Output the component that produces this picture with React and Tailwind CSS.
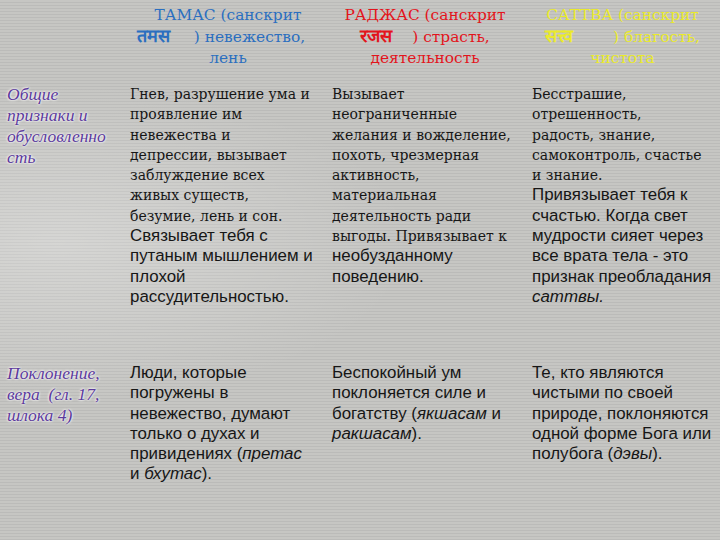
import React from "react";

const serif = "font-['DejaVu_Serif',serif]";
const sans = "font-['Liberation_Sans',Arial,sans-serif]";

function L({ children, s, it }) {
  return (
    <span
      className={`block whitespace-nowrap ${s ? `${sans} text-[16.9px]` : `${serif} text-[14px]`} ${it ? "italic" : ""}`}
    >
      {children}
    </span>
  );
}

function Head({ color, l1, dev, gap, l2, l3, pad, trail }) {
  return (
    <div className={`${serif} text-[15.4px] leading-[21.5px] text-center pt-[5px] ${pad} ${color}`}>
      <span className="block whitespace-nowrap">{l1}</span>
      <span className="block whitespace-nowrap">
        <span className="font-bold text-[18px] leading-[18px]">{dev}</span>
        <span className={`inline-block ${gap}`}></span>
        {l2}
        <span className={`inline-block ${trail}`}></span>
      </span>
      <span className="block whitespace-nowrap">{l3}</span>
    </div>
  );
}

function Label({ lines }) {
  return (
    <div className={`font-['Liberation_Serif',serif] italic text-[17.5px] leading-[21px] text-[#5b3a9c] [text-shadow:0_0_3px_#ffffff,0_0_2px_#ffffff] pl-[7px]`}>
      {lines.map((t, i) => (
        <span key={i} className="block whitespace-pre">{t}</span>
      ))}
    </div>
  );
}

export default function App() {
  return (
    <div className="w-[720px] h-[540px] overflow-hidden text-[#161616] bg-[radial-gradient(ellipse_at_8%_45%,rgba(255,255,255,0.28),rgba(255,255,255,0)_38%),repeating-linear-gradient(180deg,#c6c6c3_0px,#c6c6c3_2px,#bbbbb9_2px,#bbbbb9_3px)]">
      <div className="grid grid-cols-[123px_202px_200px_195px]">
        {/* header */}
        <div className="h-[84px]"></div>
        <Head color="text-[#2b6fc0]" pad="pl-[8px]" l1="ТАМАС (санскрит" dev="तमस" gap="w-[24px]" l2=") невежество," trail="w-[14px]" l3="лень" />
        <Head color="text-[#e3141c]" pad="" l1="РАДЖАС (санскрит" dev="रजस" gap="w-[20px]" l2=") страсть," trail="w-0" l3="деятельность" />
        <Head color="text-[#eaea2c]" pad="" l1="САТТВА (санскрит" dev="सत्त्व" gap="w-[40px]" l2=") благость," trail="w-0" l3="чистота" />

        {/* row 1 */}
        <div className="h-[279px]">
          <Label lines={["Общие", "признаки и", "обусловленно", "сть"]} />
        </div>
        <div className="pl-[7px] leading-[20.3px]">
          <L>Гнев, разрушение ума и</L>
          <L>проявление им</L>
          <L>невежества и</L>
          <L>депрессии, вызывает</L>
          <L>заблуждение всех</L>
          <L>живых существ,</L>
          <L>безумие, лень и сон.</L>
          <L s>Связывает тебя с</L>
          <L s>путаным мышлением и</L>
          <L s>плохой</L>
          <L s>рассудительностью.</L>
        </div>
        <div className="pl-[7px] leading-[20.3px]">
          <L>Вызывает</L>
          <L>неограниченные</L>
          <L>желания и вожделение,</L>
          <L>похоть, чрезмерная</L>
          <L>активность,</L>
          <L>материальная</L>
          <L>деятельность ради</L>
          <L>выгоды. Привязывает к</L>
          <L s>необузданному</L>
          <L s>поведению.</L>
        </div>
        <div className="pl-[7px] leading-[20.3px]">
          <L>Бесстрашие,</L>
          <L>отрешенность,</L>
          <L>радость, знание,</L>
          <L>самоконтроль, счастье</L>
          <L>и знание.</L>
          <L s>Привязывает тебя к</L>
          <L s>счастью. Когда свет</L>
          <L s>мудрости сияет через</L>
          <L s>все врата тела - это</L>
          <L s>признак преобладания</L>
          <L s it>саттвы.</L>
        </div>

        {/* row 2 */}
        <div>
          <Label lines={["Поклонение,", "вера  (гл. 17,", "шлока 4)"]} />
        </div>
        <div className="pl-[7px] leading-[20.3px]">
          <L s>Люди, которые</L>
          <L s>погружены в</L>
          <L s>невежество, думают</L>
          <L s>только о духах и</L>
          <L s>привидениях (<i>претас</i></L>
          <L s>и <i>бхутас</i>).</L>
        </div>
        <div className="pl-[7px] leading-[20.3px]">
          <L s>Беспокойный ум</L>
          <L s>поклоняется силе и</L>
          <L s>богатству (<i>якшасам</i> и</L>
          <L s><i>ракшасам</i>).</L>
        </div>
        <div className="pl-[7px] leading-[20.3px]">
          <L s>Те, кто являются</L>
          <L s>чистыми по своей</L>
          <L s>природе, поклоняются</L>
          <L s>одной форме Бога или</L>
          <L s>полубога (<i>дэвы</i>).</L>
        </div>
      </div>
    </div>
  );
}
